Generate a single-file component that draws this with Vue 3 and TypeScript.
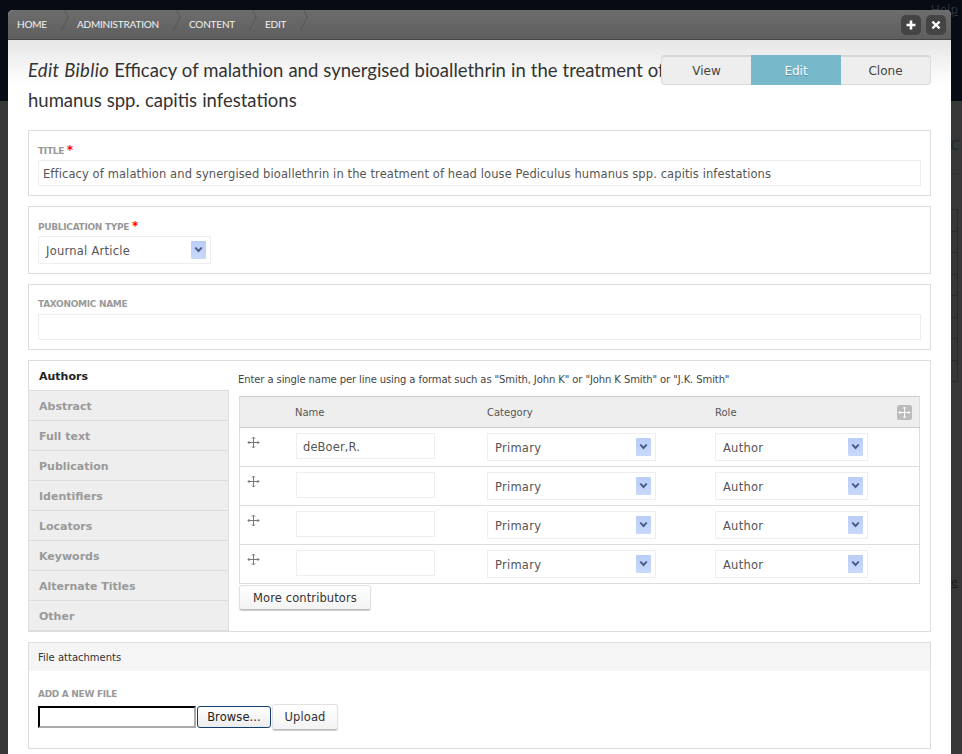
<script setup lang="ts">
const crumbs = ['Home', 'Administration', 'Content', 'Edit']
const modes = ['View', 'Edit', 'Clone']
const tabs = ['Authors', 'Abstract', 'Full text', 'Publication', 'Identifiers', 'Locators', 'Keywords', 'Alternate Titles', 'Other']
const authors = ['deBoer,R.', '', '', '']
const bgRows = 8
</script>

<template>
  <div class="page">
    <header class="bg-head"><a class="bg-help">Help</a></header>
    <main class="bg-main">
      <div class="bg-c">c</div>
      <div class="bg-rule"></div>
      <div class="bg-table">
        <div v-for="n in bgRows" :key="n" class="bg-row"></div>
      </div>
      <div class="bg-e">e</div>
    </main>

    <div class="modal">
      <div class="titlebar">
        <ul class="crumbs">
          <li v-for="c in crumbs" :key="c">{{ c }}</li>
        </ul>
        <div class="win-btns">
          <button class="win-btn">
            <svg width="10" height="10" viewBox="0 0 10 10"><path d="M3.7 0.5h2.6v3.2h3.2v2.6H6.3v3.2H3.7V6.3H0.5V3.7h3.2z" fill="#fff" /></svg>
          </button>
          <button class="win-btn">
            <svg width="10" height="10" viewBox="0 0 10 10"><path d="M2.2 0.8 5 3.4 7.8 0.8 9.4 2.4 6.7 5l2.7 2.6-1.6 1.6L5 6.6 2.2 9.2 0.6 7.6 3.3 5 0.6 2.4z" fill="#fff" /></svg>
          </button>
        </div>
      </div>

      <div class="content">
        <div class="head">
          <h1><em>Edit Biblio</em> Efficacy of malathion and synergised bioallethrin in the treatment of head louse Pediculus<br />humanus spp. capitis infestations</h1>
          <div class="modes">
            <a v-for="m in modes" :key="m" :class="{ active: m === 'Edit' }">{{ m }}</a>
          </div>
        </div>

        <section class="panel">
          <label>Title <span class="req">*</span></label>
          <input class="text wide" value="Efficacy of malathion and synergised bioallethrin in the treatment of head louse Pediculus humanus spp. capitis infestations" />
        </section>

        <section class="panel pub">
          <label>Publication Type <span class="req">*</span></label>
          <div class="select s-type">
            <span>Journal Article</span>
            <i class="arrow"><svg width="9" height="6" viewBox="0 0 9 6"><path d="M0.5 1 2 0 4.5 2.6 7 0 8.5 1 4.5 5.5z" fill="#46598a" /></svg></i>
          </div>
        </section>

        <section class="panel">
          <label>Taxonomic Name</label>
          <input class="text wide" />
        </section>

        <section class="tabs-panel">
          <ul class="tabs">
            <li v-for="t in tabs" :key="t" :class="{ current: t === 'Authors' }">{{ t }}</li>
          </ul>
          <div class="tab-body">
            <p class="hint">Enter a single name per line using a format such as "Smith, John K" or "John K Smith" or "J.K. Smith"</p>
            <table>
              <thead>
                <tr>
                  <th class="c-drag"></th>
                  <th class="c-name">Name</th>
                  <th class="c-cat">Category</th>
                  <th class="c-role">Role</th>
                  <th class="c-end">
                    <i class="toggle">
                      <svg width="13" height="13" viewBox="0 0 13 13"><path d="M6.5 1v11M1 6.5h11M5 2.5 6.5 1 8 2.5M5 10.5 6.5 12 8 10.5M2.5 5 1 6.5 2.5 8M10.5 5 12 6.5 10.5 8" fill="none" stroke="#fff" /></svg>
                    </i>
                  </th>
                </tr>
              </thead>
              <tbody>
                <tr v-for="(a, i) in authors" :key="i">
                  <td class="drag">
                    <svg width="13" height="13" viewBox="0 0 13 13"><path d="M6.5 1v11M1 6.5h11M5 2.5 6.5 1 8 2.5M5 10.5 6.5 12 8 10.5M2.5 5 1 6.5 2.5 8M10.5 5 12 6.5 10.5 8" fill="none" stroke="#777" /></svg>
                  </td>
                  <td><input class="text name" :value="a" /></td>
                  <td>
                    <div class="select s-cat">
                      <span>Primary</span>
                      <i class="arrow"><svg width="9" height="6" viewBox="0 0 9 6"><path d="M0.5 1 2 0 4.5 2.6 7 0 8.5 1 4.5 5.5z" fill="#46598a" /></svg></i>
                    </div>
                  </td>
                  <td>
                    <div class="select s-role">
                      <span>Author</span>
                      <i class="arrow"><svg width="9" height="6" viewBox="0 0 9 6"><path d="M0.5 1 2 0 4.5 2.6 7 0 8.5 1 4.5 5.5z" fill="#46598a" /></svg></i>
                    </div>
                  </td>
                  <td></td>
                </tr>
              </tbody>
            </table>
            <button class="btn more">More contributors</button>
          </div>
        </section>

        <section class="files">
          <div class="files-head">File attachments</div>
          <div class="files-body">
            <label>Add a new file</label>
            <div class="file-row">
              <span class="file-box"></span>
              <button class="browse">Browse...</button>
              <button class="btn upload">Upload</button>
            </div>
          </div>
        </section>
      </div>
    </div>
  </div>
</template>

<style>
html,
body {
  margin: 0;
  height: 100%;
  overflow: hidden;
  background: #373737;
}
</style>

<style scoped>
.page {
  position: relative;
  width: 962px;
  height: 754px;
  overflow: hidden;
  font-family: "DejaVu Sans", sans-serif;
  font-size: 11px;
  color: #555;
}

.bg-head {
  height: 101px;
  background: #060b14;
  display: flex;
  justify-content: flex-end;
  padding-right: 4px;
}

.bg-help {
  font-size: 12px;
  color: #2c323c;
  text-decoration: underline;
  padding-top: 3px;
  height: 14px;
}

.bg-main {
  padding: 34px 4px 0 0;
  display: flex;
  flex-direction: column;
  align-items: flex-end;
  color: #1d2a33;
}

.bg-c {
  font-size: 18px;
  line-height: 18px;
  width: 8px;
}

.bg-rule {
  width: 12px;
  margin-top: 20px;
  border-top: 1px solid #2f2f2f;
}

.bg-table {
  width: 12px;
  margin-top: 35px;
  border: 1px solid #2a2a2a;
  border-width: 1px 1px 0 0;
}

.bg-row {
  height: 20.5px;
  border-bottom: 1px solid #2a2a2a;
}

.bg-e {
  width: 7px;
  margin-top: 194px;
  color: #1c1c1c;
  text-decoration: underline;
  line-height: 14px;
}

.modal {
  position: absolute;
  left: 8px;
  top: 10px;
  bottom: 0;
  width: 943px;
  background: #fff;
  border-radius: 5px 5px 0 0;
  overflow: hidden;
}

.titlebar {
  height: 30px;
  box-sizing: border-box;
  border-bottom: 1px solid #444;
  background: linear-gradient(#6c6c6c, #5f5f5f);
  display: flex;
  justify-content: space-between;
  align-items: center;
}

.crumbs {
  display: flex;
  height: 100%;
  margin: 0;
  padding: 0;
  list-style: none;
}

.crumbs li {
  position: relative;
  padding: 0 18px 0 12px;
  line-height: 29px;
  font-family: "Lato", sans-serif;
  font-size: 10px;
  letter-spacing: -0.2px;
  text-transform: uppercase;
  color: #f2f2f2;
}

.crumbs li:first-child {
  padding: 0 18px 0 9px;
}

.crumbs li::after {
  content: "";
  position: absolute;
  top: 4px;
  right: 0;
  width: 20px;
  height: 20px;
  box-sizing: border-box;
  border-top: 1px solid #505050;
  border-right: 1px solid #505050;
  transform: scaleX(0.5) rotate(45deg);
  transform-origin: right center;
}

.win-btns {
  display: flex;
  gap: 5px;
  padding-right: 5px;
}

.win-btn {
  width: 20px;
  height: 20px;
  padding: 0;
  border: 0;
  border-radius: 5px;
  background: #444;
  display: flex;
  align-items: center;
  justify-content: center;
}

.content {
  padding: 0 20px;
  background: linear-gradient(#e6e6e6, #fff 45px) no-repeat;
}

.head {
  position: relative;
  height: 90px;
  padding-top: 15px;
  box-sizing: border-box;
}

h1 {
  margin: 0;
  font-family: "Lato", sans-serif;
  font-size: 18.5px;
  font-weight: 400;
  line-height: 30px;
  word-spacing: 0.3px;
  color: #333;
  white-space: nowrap;
}

h1 em {
  letter-spacing: 0.3px;
}

.modes {
  position: absolute;
  right: 0;
  top: 15px;
  display: flex;
  width: 270px;
  height: 30px;
  box-sizing: border-box;
  border: 1px solid #ddd;
  border-top: 2px solid #d6d6d6;
  border-radius: 4px;
  background: #eee;
  font-size: 12px;
  color: #444;
}

.modes a {
  flex: 1;
  line-height: 28px;
  text-align: center;
}

.modes a.active {
  flex: none;
  width: 90px;
  margin: -2px 0 -1px;
  line-height: 32px;
  background: #77b8cb;
  color: #fff;
  text-shadow: 0 1px 0 #5b93a5;
}

.panel {
  border: 1px solid #ddd;
  padding: 13px 9px 9px;
  margin-bottom: 10px;
  height: 66px;
  box-sizing: border-box;
}

.panel.pub {
  height: 68px;
}

label {
  display: block;
  height: 16px;
  line-height: 13px;
  font-size: 9px;
  font-weight: 700;
  letter-spacing: -0.3px;
  text-transform: uppercase;
  color: #999;
}

.req {
  color: #f00;
  font-size: 12px;
}

.text {
  box-sizing: border-box;
  height: 26px;
  padding: 2px 4px 0;
  border: 1px solid #eee;
  outline: none;
  font-family: inherit;
  font-size: 11.5px;
  letter-spacing: 0.1px;
  color: #555;
  background: #fff;
}

.text.wide {
  width: 100%;
  display: block;
}

.text.name {
  width: 139px;
  display: block;
  margin: 0 0 2px 1px;
  padding: 2px 6px 0;
}

.select {
  box-sizing: border-box;
  height: 28px;
  border: 1px solid #eee;
  display: flex;
  align-items: center;
  justify-content: space-between;
  padding: 0 4px 0 7px;
  font-size: 11.5px;
  letter-spacing: 0.25px;
  color: #555;
  background: #fff;
}

.select span {
  padding-top: 2px;
}

.s-type {
  width: 173px;
}

.s-cat {
  width: 169px;
}

.s-role {
  width: 153px;
}

.arrow {
  width: 15px;
  height: 18px;
  border-radius: 1px;
  background: linear-gradient(#b9cdf6, #c9d9fb);
  display: flex;
  align-items: center;
  justify-content: center;
}

.tabs-panel {
  height: 272px;
  box-sizing: border-box;
  border: 1px solid #ddd;
  display: flex;
  margin-bottom: 10px;
}

.tabs {
  width: 199px;
  flex: none;
  margin: 0;
  padding: 0;
  list-style: none;
  border-right: 1px solid #ddd;
}

.tabs li {
  box-sizing: border-box;
  height: 30px;
  line-height: 31px;
  padding-left: 10px;
  font-size: 11px;
  font-weight: 700;
  color: #999;
  background: #eee;
  border-bottom: 1px solid #ddd;
}

.tabs li.current {
  margin-right: -1px;
  color: #222;
  background: #fff;
  border-bottom: 1px solid #ddd;
}

.tab-body {
  flex: 1;
  padding: 0 10px;
}

.hint {
  margin: 0 0 0 -1px;
  height: 35px;
  padding-top: 11px;
  box-sizing: border-box;
  font-size: 10px;
  line-height: 16px;
  letter-spacing: -0.1px;
  color: #444;
  white-space: nowrap;
}

table {
  width: 681px;
  border-collapse: collapse;
  table-layout: fixed;
  font-size: 12px;
}

th {
  height: 30px;
  padding: 0;
  text-align: left;
  font-size: 10px;
  font-weight: 400;
  color: #555;
  background: #eee;
  border: 1px solid #ccc;
  border-width: 1px 0;
}

th:first-child,
td:first-child {
  border-left: 1px solid #ddd;
}

th:last-child,
td:last-child {
  border-right: 1px solid #ddd;
}

td {
  height: 39px;
  padding: 0;
  box-sizing: border-box;
  border-bottom: 1px solid #ddd;
}

.c-drag {
  width: 55px;
}

.c-name {
  width: 192px;
}

.c-cat {
  width: 228px;
}

.c-role {
  width: 175px;
}

.drag {
  vertical-align: top;
  padding: 8px 0 0 7px;
}

.c-end {
  padding-right: 7px;
}

.toggle {
  width: 15px;
  height: 15px;
  border-radius: 2px;
  background: #bbb;
  display: flex;
  align-items: center;
  justify-content: center;
  margin-left: auto;
}

.btn {
  box-sizing: border-box;
  height: 26px;
  padding: 0;
  border: 1px solid #e2e2e2;
  border-bottom-color: #bbb;
  border-radius: 3px;
  background: linear-gradient(#fff, #f3f3f3);
  box-shadow: 0 1px 1px #ccc;
  font-family: inherit;
  font-size: 11.5px;
  letter-spacing: 0.1px;
  color: #333;
}

.more {
  display: block;
  width: 132px;
  height: 25px;
  margin-top: 1px;
}

.files {
  height: 107px;
  box-sizing: border-box;
  border: 1px solid #ddd;
}

.files-head {
  height: 28px;
  line-height: 30px;
  padding-left: 9px;
  font-size: 10px;
  color: #333;
  background: #f5f5f5;
}

.files-body {
  padding: 17px 9px 0;
}

.file-row {
  display: flex;
  align-items: center;
}

.file-box {
  box-sizing: border-box;
  width: 158px;
  height: 22px;
  border: 2px solid;
  border-color: #000 #aaa #aaa #000;
  background: #fff;
}

.browse {
  box-sizing: border-box;
  width: 74px;
  height: 22px;
  margin-left: 1px;
  padding: 0;
  border: 1px solid #123f6d;
  border-radius: 3px;
  background: linear-gradient(#fff, #ececec);
  font-family: inherit;
  font-size: 11.5px;
  letter-spacing: 0.1px;
  color: #222;
}

.upload {
  width: 66px;
  margin-left: 1px;
}
</style>
